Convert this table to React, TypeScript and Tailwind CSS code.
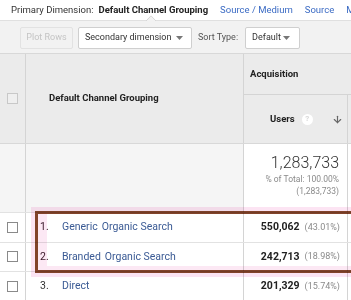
import { ArrowDown } from "lucide-react";

const rows = [
  { n: "1.", a: "Generic", b: "Organic Search", v: "550,062", p: "(43.01%)", hl: true },
  { n: "2.", a: "Branded", b: "Organic Search", v: "242,713", p: "(18.98%)", hl: true },
  { n: "3.", a: "Direct", b: "", v: "201,329", p: "(15.74%)", hl: false },
];

function Caret() {
  return (
    <svg width="7" height="4" viewBox="0 0 7 4">
      <path d="M0 0 L7 0 L3.5 4 Z" fill="#777" />
    </svg>
  );
}

export default function App() {
  return (
    <div className="w-[351px] h-[300px] overflow-hidden bg-white font-['Roboto',sans-serif] text-[#222] relative">
      {/* primary dimension bar */}
      <div className="h-[20px] flex items-center whitespace-nowrap text-[9.5px] pl-[11px] relative">
        <span className="text-[#333]">Primary Dimension:</span>
        <span className="ml-[5px] font-bold text-[#222]">Default Channel Grouping</span>
        <span className="ml-[12px] text-[#3b6bc4]">Source / Medium</span>
        <span className="ml-[12px] text-[#3b6bc4]">Source</span>
        <span className="ml-[12px] text-[#3b6bc4]">Medium</span>
        <svg className="absolute left-[146px] top-[15px]" width="10" height="6" viewBox="0 0 10 6">
          <path d="M0 6 L5 0.8 L10 6" fill="#f2f2f2" stroke="#d6d6d6" strokeWidth="1" />
        </svg>
      </div>

      {/* toolbar */}
      <div className="h-[33px] bg-[#f2f2f2] border-t border-[#e0e0e0] flex items-start pt-[6px] whitespace-nowrap text-[9px] pl-[20px]">
        <div className="h-[22px] w-[53px] flex items-center justify-center border border-[#e2e2e2] rounded-[2px] text-[#c4c4c4]">
          Plot Rows
        </div>
        <div className="ml-[5px] h-[22px] w-[114px] flex items-center justify-between pl-[6px] pr-[8px] border border-[#cfcfcf] rounded-[2px] bg-white text-[#333]">
          <span>Secondary dimension</span>
          <Caret />
        </div>
        <div className="h-[22px] flex items-center ml-[6px] text-[#555]">Sort Type:</div>
        <div className="ml-[7px] h-[22px] w-[55px] flex items-center justify-between pl-[6px] pr-[9px] border border-[#cfcfcf] rounded-[2px] bg-white text-[#333]">
          <span>Default</span>
          <Caret />
        </div>
      </div>

      {/* table header */}
      <div className="flex h-[90px] bg-[#ebebeb] border-t border-[#d8d8d8] text-[9.5px]">
        <div className="w-[26px] shrink-0 border-r border-[#d4d4d4] flex items-center justify-center">
          <div className="w-[11px] h-[11px] border border-[#c8c8c8] bg-[#efefef]" />
        </div>
        <div className="w-[218px] shrink-0 border-r border-[#d4d4d4] flex items-center pl-[23px] font-bold">
          Default Channel Grouping
        </div>
        <div className="flex-1 flex flex-col">
          <div className="h-[41px] border-b border-[#d4d4d4] flex items-center pl-[6px] font-bold">
            Acquisition
          </div>
          <div className="flex-1 flex">
            <div className="w-[104px] shrink-0 border-r border-[#d4d4d4] flex items-center pl-[26px] pr-[4px]">
              <span className="font-bold">Users</span>
              <span className="ml-[7px] w-[11px] h-[11px] rounded-full bg-white text-[#d8d8d8] text-[8px] font-bold flex items-center justify-center">
                ?
              </span>
              <ArrowDown className="ml-auto text-[#666]" size={11} strokeWidth={2.5} />
            </div>
            <div className="flex-1" />
          </div>
        </div>
      </div>

      {/* totals */}
      <div className="flex h-[69px] border-t border-[#d8d8d8]">
        <div className="w-[26px] shrink-0 bg-[#f5f5f5] border-r border-[#d4d4d4]" />
        <div className="w-[218px] shrink-0 bg-[#f5f5f5] border-r border-[#d4d4d4]" />
        <div className="w-[104px] shrink-0 border-r border-[#d4d4d4] flex flex-col items-end pr-[8px] pt-[11px] leading-none">
          <span className="text-[16px] text-[#333] font-light">1,283,733</span>
          <span className="mt-[4px] text-[8.5px] text-[#8a8a8a]">% of Total: 100.00%</span>
          <span className="mt-[3px] text-[8.5px] text-[#8a8a8a]">(1,283,733)</span>
        </div>
        <div className="flex-1" />
      </div>

      {/* rows */}
      {rows.map((r) => (
        <div key={r.n} className="flex h-[29.5px] border-t border-[#e2e2e2] text-[10.5px] whitespace-nowrap">
          <div className="w-[26px] shrink-0 border-r border-[#d4d4d4] flex items-center justify-center">
            <div className="w-[11px] h-[11px] border border-[#8a8a8a] bg-white" />
          </div>
          <div className="w-[218px] shrink-0 border-r border-[#d4d4d4] flex items-center pl-[14px]">
            <span className={`w-[22px] ${r.hl ? "text-[#3a1a2a]" : "text-[#333]"}`}>{r.n}</span>
            <span className="text-[#3a5a94]">{r.a}</span>
            {r.b && <span className="ml-[4px] text-[#3a5a94]">{r.b}</span>}
          </div>
          <div className="w-[104px] shrink-0 border-r border-[#d4d4d4] flex items-center justify-end pr-[7px]">
            <span className="font-bold text-[#222]">{r.v}</span>
            <span className="ml-[5px] text-[9px] text-[#8a8a8a]">{r.p}</span>
          </div>
          <div className="flex-1" />
        </div>
      ))}

      {/* highlight box, multiplied so the text under it stays dark */}
      <div className="absolute left-[35px] top-[211px] w-[330px] h-[62px] border-[3px] border-[#82432a] outline-[4px] outline-solid outline-[#fce4f3] shadow-[inset_9px_-4px_0_#fce8f4] mix-blend-multiply pointer-events-none" />
    </div>
  );
}
